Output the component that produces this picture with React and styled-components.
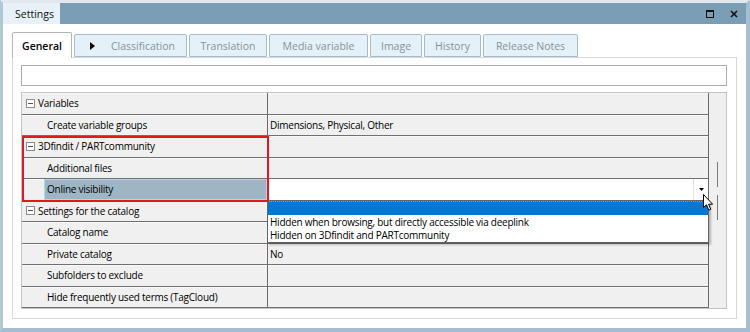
import React from "react";
import styled, { createGlobalStyle } from "styled-components";

const GlobalStyle = createGlobalStyle`
  html, body { margin: 0; padding: 0; background: #fff; }
  body { font-family: "Open Sans", "Liberation Sans", sans-serif; font-size: 10px; color: #000; }
  * { box-sizing: border-box; }
`;

const tabs = [
  { label: "General", width: 60, active: true },
  { label: "Classification", width: 113, arrow: true },
  { label: "Translation", width: 78 },
  { label: "Media variable", width: 99 },
  { label: "Image", width: 52 },
  { label: "History", width: 57 },
  { label: "Release Notes", width: 95 },
];

const rows = [
  { type: "cat", name: "Variables" },
  { name: "Create variable groups", value: "Dimensions, Physical, Other" },
  { type: "cat", name: "3Dfindit / PARTcommunity" },
  { name: "Additional files" },
  { name: "Online visibility", selected: true, combo: true },
  { type: "cat", name: "Settings for the catalog" },
  { name: "Catalog name" },
  { name: "Private catalog", value: "No" },
  { name: "Subfolders to exclude" },
  { name: "Hide frequently used terms (TagCloud)" },
];

const options = [
  "",
  "Hidden when browsing, but directly accessible via deeplink",
  "Hidden on 3Dfindit and PARTcommunity",
];

const App = () => {
  return (
    <>
      <GlobalStyle />
      <Window>
        <TitleBar>
          <TitleTab>Settings</TitleTab>
          <TitleButtons>
            <svg width="8" height="8" viewBox="0 0 8 8">
              <rect x="0.5" y="0.5" width="7" height="7" fill="none" stroke="#111" strokeWidth="1" />
              <rect x="0" y="0" width="8" height="2" fill="#111" />
            </svg>
            <svg width="8" height="8" viewBox="0 0 8 8">
              <path d="M1 1 L7 7 M7 1 L1 7" stroke="#111" strokeWidth="1.6" />
            </svg>
          </TitleButtons>
        </TitleBar>

        <Body>
          <TabStrip>
            {tabs.map((t) => (
              <Tab key={t.label} $active={t.active} $arrow={t.arrow} $w={t.width}>
                {t.arrow && <TabArrow />}
                {t.label}
              </Tab>
            ))}
          </TabStrip>

          <Panel>
            <TextBox />
            <Grid>
              <Rows>
                {rows.map((r) =>
                  r.type === "cat" ? (
                    <Row key={r.name}>
                      <CatCell>
                        <MinusBox />
                        {r.name}
                      </CatCell>
                      <ValueCell />
                    </Row>
                  ) : (
                    <Row key={r.name}>
                      <MarginCell />
                      <NameCell $selected={r.selected}>{r.name}</NameCell>
                      <ValueCell $white={r.combo}>
                        {r.value}
                        {r.combo && (
                          <>
                            <ComboButton>
                              <svg width="5" height="3" viewBox="0 0 5 3">
                                <path d="M0 0 H5 L2.5 3 Z" fill="#000" />
                              </svg>
                            </ComboButton>
                            <DropList>
                              {options.map((o, i) => (
                                <Option key={i} $active={i === 0}>
                                  {o}
                                </Option>
                              ))}
                            </DropList>
                          </>
                        )}
                      </ValueCell>
                    </Row>
                  )
                )}
              </Rows>
              <ScrollTrack>
                <ThumbLine />
                <ThumbLine />
              </ScrollTrack>
              <Highlight />
              <Cursor>
                <svg width="12" height="18" viewBox="0 0 12 18">
                  <path
                    d="M0.5 0.5 L0.5 13.5 L3.5 10.8 L5.8 16.2 L7.8 15.3 L5.6 10.2 L9.6 10.2 Z"
                    fill="#fff"
                    stroke="#000"
                    strokeWidth="1"
                    strokeLinejoin="round"
                  />
                </svg>
              </Cursor>
            </Grid>
          </Panel>
        </Body>
      </Window>
    </>
  );
};

export default App;

const Window = styled.div`
  width: 750px;
  height: 332px;
  display: flex;
  flex-direction: column;
  background: #fff;
  border-top: 3px solid #e1e9ef;
  border-left: 3px solid #b2c7d6;
  border-right: 4px solid #a4bdcf;
  border-bottom: 4px solid #a4bdcf;
`;

const TitleBar = styled.div`
  height: 21px;
  display: flex;
  align-items: stretch;
  background: #7b9eb4;
`;

const TitleTab = styled.div`
  width: 57px;
  padding-left: 12px;
  display: flex;
  align-items: center;
  background: #e8f1f7;
  font-size: 10.5px;
  color: #111;
`;

const TitleButtons = styled.div`
  margin-left: auto;
  margin-right: 8px;
  display: flex;
  align-items: center;
  gap: 16px;
`;

const Body = styled.div`
  flex: 1;
  display: flex;
  flex-direction: column;
  padding: 8px 9px 9px 9px;
`;

const TabStrip = styled.div`
  height: 25px;
  display: flex;
  align-items: flex-end;
  gap: 2px;
  position: relative;
  z-index: 1;
`;

const Tab = styled.div`
  width: ${(p) => p.$w}px;
  height: ${(p) => (p.$active ? 26 : 23)}px;
  margin-bottom: ${(p) => (p.$active ? -1 : 0)}px;
  display: flex;
  align-items: center;
  justify-content: ${(p) => (p.$arrow ? "flex-start" : "center")};
  padding-left: ${(p) => (p.$arrow ? 15 : 0)}px;
  gap: 16px;
  border: 1px solid ${(p) => (p.$active ? "#b4b4b4" : "#a6bccc")};
  border-bottom: ${(p) => (p.$active ? "none" : "1px solid #a6bccc")};
  border-radius: 2px 2px 0 0;
  background: ${(p) => (p.$active ? "#fff" : "#e5f1f8")};
  color: ${(p) => (p.$active ? "#000" : "#85919a")};
  font-size: 10.5px;
  font-weight: ${(p) => (p.$active ? 600 : 400)};
`;

const TabArrow = styled.span`
  width: 0;
  height: 0;
  border-top: 4px solid transparent;
  border-bottom: 4px solid transparent;
  border-left: 5px solid #000;
`;

const Panel = styled.div`
  flex: 1;
  display: flex;
  flex-direction: column;
  border: 1px solid #d9d9d9;
  padding: 7px 9px 9px 8px;
`;

const TextBox = styled.div`
  height: 21px;
  border: 1px solid #ababab;
  background: #fff;
`;

const Grid = styled.div`
  margin-top: 6px;
  height: 217px;
  display: flex;
  border: 1px solid #c4c4c4;
  position: relative;
  letter-spacing: -0.25px;
  font-size: 10px;
`;

const Rows = styled.div`
  flex: 1;
  display: grid;
  grid-template-rows: repeat(10, 1fr);
  border-right: 1px solid #6b6b6b;
`;

const Row = styled.div`
  display: grid;
  grid-template-columns: 22px 223px 1fr;
  background: #f0f0f0;
  border-bottom: 1px solid #707070;
  box-shadow: inset 0 1px 0 #fafafa;
`;

const CatCell = styled.div`
  grid-column: 1 / 3;
  display: flex;
  align-items: center;
  gap: 2px;
  padding-left: 4px;
`;

const MinusBox = styled.span`
  width: 9px;
  height: 9px;
  border: 1px solid #8e8e8e;
  background: #fff;
  display: flex;
  align-items: center;
  justify-content: center;
  margin-right: 1px;

  &::after {
    content: "";
    width: 5px;
    height: 1px;
    background: #555;
  }
`;

const MarginCell = styled.div``;

const NameCell = styled.div`
  display: flex;
  align-items: center;
  background: ${(p) => (p.$selected ? "#9eb5c4" : "transparent")};
  border: ${(p) => (p.$selected ? "1px solid #9ee0ee" : "none")};
  padding-left: ${(p) => (p.$selected ? 2 : 3)}px;
`;

const ValueCell = styled.div`
  position: relative;
  display: flex;
  align-items: center;
  padding-left: 2px;
  border-left: 1px solid #6b6b6b;
  background: ${(p) => (p.$white ? "#fff" : "transparent")};
`;

const ComboButton = styled.div`
  margin-left: auto;
  width: 15px;
  align-self: stretch;
  display: flex;
  align-items: center;
  justify-content: center;
  border-left: 1px solid #e2e2e2;
`;

const DropList = styled.div`
  position: absolute;
  z-index: 3;
  top: 100%;
  left: -1px;
  width: 442px;
  height: 43px;
  background: #fff;
  border: 1px solid #646464;
  box-shadow: 2px 2px 2px rgba(0, 0, 0, 0.25);
  display: flex;
  flex-direction: column;
`;

const Option = styled.div`
  line-height: 13px;
  padding-left: 2px;
  flex: ${(p) => (p.$active ? "0 0 14px" : "0 0 13px")};
  background: ${(p) => (p.$active ? "#0078d7" : "transparent")};
  border-top: ${(p) => (p.$active ? "1px dotted #e6893c" : "none")};
  margin-bottom: ${(p) => (p.$active ? 1 : 0)}px;
`;

const ScrollTrack = styled.div`
  width: 17px;
  background: #efefef;
  display: flex;
  flex-direction: column;
  align-items: center;
  gap: 8px;
  padding-top: 69px;
`;

const ThumbLine = styled.span`
  width: 1.5px;
  height: 25px;
  background: #7a7a7a;
`;

const Highlight = styled.div`
  position: absolute;
  left: 0;
  top: 43px;
  width: 247px;
  height: 66px;
  border: 2px solid #e5161e;
  pointer-events: none;
  z-index: 4;
`;

const Cursor = styled.div`
  position: absolute;
  left: 681px;
  top: 101px;
  z-index: 5;
  line-height: 0;
`;
